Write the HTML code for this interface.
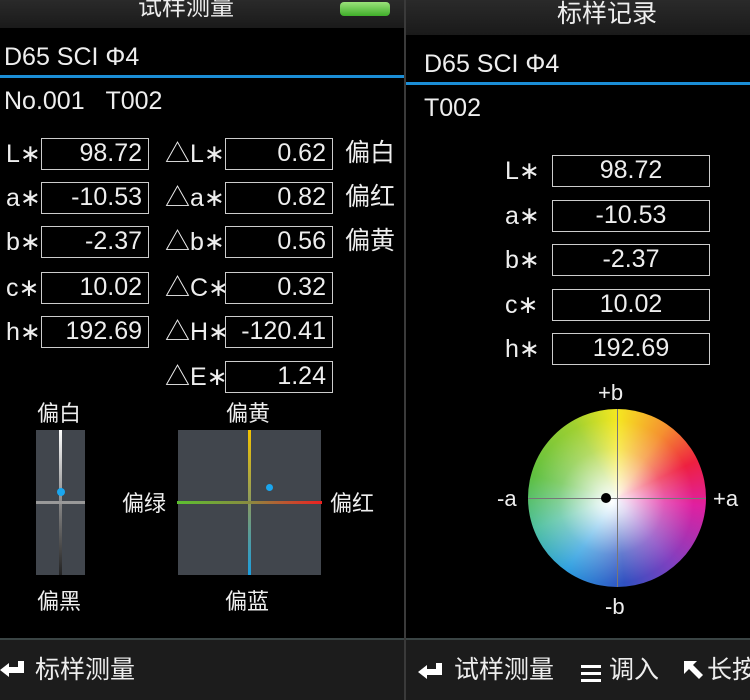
<!DOCTYPE html>
<html><head><meta charset="utf-8"><style>
*{margin:0;padding:0;box-sizing:border-box}
body{width:750px;height:700px;background:#000;position:relative;overflow:hidden;color:#eee;font-family:"Liberation Sans","Noto Sans CJK SC",sans-serif}
.a{position:absolute;white-space:nowrap}
.t{font-size:25px;line-height:1}
.box{position:absolute;border:1.5px solid #ccc;height:32px;font-size:25px;line-height:29px;text-align:right;padding-right:6px;color:#eee}
.bar{background:linear-gradient(#2a2a2a,#1a1a1a)}
</style></head><body>
<div class="a bar" style="left:0;top:0;width:405px;height:28px"></div>
<div class="a t" style="left:138px;top:-4px;font-size:24px">试样测量</div>
<div class="a" style="left:340px;top:2px;width:50px;height:14px;border-radius:4px;background:linear-gradient(#9be27a,#3fae2a)"></div>
<div class="a t" style="left:4px;top:45px">D65 SCI Φ4</div>
<div class="a" style="left:0;top:75px;width:405px;height:3px;background:#1b8ed6"></div>
<div class="a t" style="left:4px;top:89px">No.001&nbsp;&nbsp;&nbsp;T002</div>

<div class="a t" style="left:6px;top:142px">L∗</div>
<div class="a t" style="left:6px;top:186px">a∗</div>
<div class="a t" style="left:6px;top:230px">b∗</div>
<div class="a t" style="left:6px;top:276px">c∗</div>
<div class="a t" style="left:6px;top:320px">h∗</div>
<div class="box" style="left:41px;top:138px;width:108px">98.72</div>
<div class="box" style="left:41px;top:182px;width:108px">-10.53</div>
<div class="box" style="left:41px;top:226px;width:108px">-2.37</div>
<div class="box" style="left:41px;top:272px;width:108px">10.02</div>
<div class="box" style="left:41px;top:316px;width:108px">192.69</div>

<div class="a t" style="left:165px;top:142px">△L∗</div>
<div class="a t" style="left:165px;top:186px">△a∗</div>
<div class="a t" style="left:165px;top:230px">△b∗</div>
<div class="a t" style="left:165px;top:276px">△C∗</div>
<div class="a t" style="left:165px;top:320px">△H∗</div>
<div class="a t" style="left:165px;top:365px">△E∗</div>
<div class="box" style="left:225px;top:138px;width:108px">0.62</div>
<div class="box" style="left:225px;top:182px;width:108px">0.82</div>
<div class="box" style="left:225px;top:226px;width:108px">0.56</div>
<div class="box" style="left:225px;top:272px;width:108px">0.32</div>
<div class="box" style="left:225px;top:316px;width:108px">-120.41</div>
<div class="box" style="left:225px;top:361px;width:108px">1.24</div>
<div class="a t" style="left:345px;top:141px">偏白</div>
<div class="a t" style="left:345px;top:185px">偏红</div>
<div class="a t" style="left:345px;top:229px">偏黄</div>

<div class="a" style="left:37px;top:396px;font-size:22px">偏白</div>
<div class="a" style="left:37px;top:584px;font-size:22px">偏黑</div>
<div class="a" style="left:36px;top:430px;width:49px;height:145px;background:#41464d"></div>
<div class="a" style="left:59px;top:430px;width:3px;height:145px;background:linear-gradient(#fff,#888 50%,#222)"></div>
<div class="a" style="left:36px;top:501px;width:49px;height:3px;background:#999"></div>
<div class="a" style="left:57px;top:488px;width:8px;height:8px;border-radius:50%;background:#1aa6ee"></div>

<div class="a" style="left:226px;top:396px;font-size:22px">偏黄</div>
<div class="a" style="left:225px;top:584px;font-size:22px">偏蓝</div>
<div class="a" style="left:122px;top:486px;font-size:22px">偏绿</div>
<div class="a" style="left:330px;top:486px;font-size:22px">偏红</div>
<div class="a" style="left:178px;top:430px;width:143px;height:145px;background:#41464d"></div>
<div class="a" style="left:248px;top:430px;width:3px;height:145px;background:linear-gradient(#f5c400,#8a9a60 50%,#1a9ee0)"></div>
<div class="a" style="left:177px;top:501px;width:145px;height:3px;background:linear-gradient(90deg,#5cc030,#8a8a40 50%,#ee2020)"></div>
<div class="a" style="left:266px;top:484px;width:7px;height:7px;border-radius:50%;background:#1aa6ee"></div>

<div class="a" style="left:0;top:638px;width:405px;height:2px;background:#3a4444"></div>
<div class="a" style="left:0;top:640px;width:405px;height:60px;background:#1c1c1c"></div>
<div class="a" style="left:0;top:660px;width:28px;height:20px"><svg width="28" height="20"><path d="M0 10 L9 3 L9 7 L18 7 L18 1 L24 1 L24 13 L9 13 L9 17 Z" fill="#fff"/></svg></div>
<div class="a t" style="left:35px;top:658px">标样测量</div>

<div class="a" style="left:404px;top:0;width:2px;height:700px;background:#3a3a3a"></div>

<div class="a bar" style="left:406px;top:0;width:344px;height:35px"></div>
<div class="a t" style="left:557px;top:2px">标样记录</div>
<div class="a t" style="left:424px;top:52px">D65 SCI Φ4</div>
<div class="a" style="left:406px;top:82px;width:344px;height:3px;background:#1b8ed6"></div>
<div class="a t" style="left:424px;top:96px">T002</div>
<div class="a t" style="left:505px;top:159px">L∗</div>
<div class="a t" style="left:505px;top:204px">a∗</div>
<div class="a t" style="left:505px;top:248px">b∗</div>
<div class="a t" style="left:505px;top:293px">c∗</div>
<div class="a t" style="left:505px;top:337px">h∗</div>
<div class="box" style="left:552px;top:155px;width:158px;text-align:center;padding:0">98.72</div>
<div class="box" style="left:552px;top:200px;width:158px;text-align:center;padding:0">-10.53</div>
<div class="box" style="left:552px;top:244px;width:158px;text-align:center;padding:0">-2.37</div>
<div class="box" style="left:552px;top:289px;width:158px;text-align:center;padding:0">10.02</div>
<div class="box" style="left:552px;top:333px;width:158px;text-align:center;padding:0">192.69</div>

<div class="a" style="left:598px;top:380px;font-size:22px">+b</div>
<div class="a" style="left:605px;top:594px;font-size:22px">-b</div>
<div class="a" style="left:497px;top:486px;font-size:22px">-a</div>
<div class="a" style="left:713px;top:486px;font-size:22px">+a</div>
<div class="a" style="left:528px;top:409px;width:178px;height:178px;border-radius:50%;background:conic-gradient(from 0deg,#f5e820,#f59030 35deg,#ee2040 65deg,#e020a0 95deg,#8040c0 140deg,#3050c0 175deg,#30a0e0 215deg,#50c0a0 250deg,#60c040 285deg,#a0d030 330deg,#f5e820)"></div>
<div class="a" style="left:528px;top:409px;width:178px;height:178px;border-radius:50%;background:radial-gradient(circle at 47% 52%,#fff 0,rgba(255,255,255,.8) 12%,rgba(255,255,255,.25) 40%,rgba(255,255,255,0) 62%)"></div>
<div class="a" style="left:617px;top:409px;width:1px;height:178px;background:#777"></div>
<div class="a" style="left:528px;top:498px;width:178px;height:1px;background:#777"></div>
<div class="a" style="left:601px;top:493px;width:10px;height:10px;border-radius:50%;background:#000"></div>

<div class="a" style="left:406px;top:638px;width:344px;height:2px;background:#3a4444"></div>
<div class="a" style="left:406px;top:640px;width:344px;height:60px;background:#1c1c1c"></div>
<div class="a" style="left:418px;top:662px"><svg width="28" height="20"><path d="M0 10 L9 3 L9 7 L18 7 L18 1 L24 1 L24 13 L9 13 L9 17 Z" fill="#fff"/></svg></div>
<div class="a t" style="left:454px;top:658px">试样测量</div>
<div class="a" style="left:581px;top:663px"><svg width="22" height="20"><rect x="0" y="2" width="20" height="3" fill="#fff"/><rect x="0" y="9" width="20" height="3" fill="#fff"/><rect x="0" y="16" width="20" height="3" fill="#fff"/></svg></div>
<div class="a t" style="left:609px;top:658px">调入</div>
<div class="a" style="left:683px;top:660px"><svg width="22" height="22"><path d="M1 1 L14 1 L10 5 L20 15 L16 19 L6 9 L1 14 Z" fill="#fff"/></svg></div>
<div class="a t" style="left:707px;top:658px">长按</div>
</body></html>
